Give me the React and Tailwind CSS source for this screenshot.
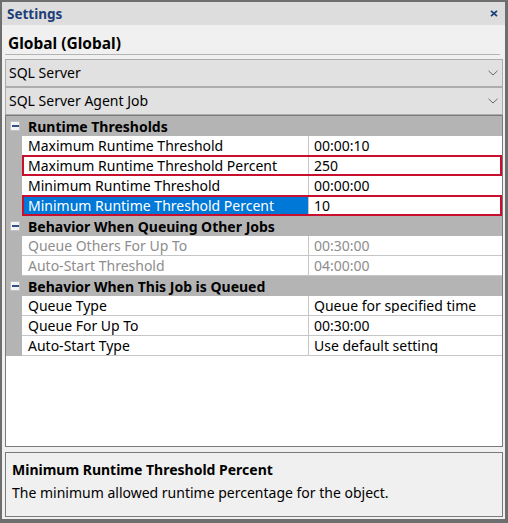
import React from "react";

const F = "font-['Noto_Sans',sans-serif]";

function Minus() {
  return (
    <div className="ml-[4px] w-[10px] h-[10px] border border-[#c2c2c2] bg-[#f4f4f4] flex items-center justify-center">
      <div className="w-[7px] h-[2px] bg-[#34508a]" />
    </div>
  );
}

function Category({ title }) {
  return (
    <div className="h-[20px] bg-[#b4b4b4] flex items-center">
      <div className="w-[16px] flex items-center">
        <Minus />
      </div>
      <span className="pl-[6px] pt-[1px] font-bold text-[14px] leading-[20px] text-black">{title}</span>
    </div>
  );
}

function Row({ name, value, disabled, selected, red, clip }) {
  const color = disabled ? "text-[#8d8d8d]" : "text-black";
  return (
    <div className="relative flex h-[20px]">
      <div className="w-[16px] bg-[#b4b4b4]" />
      <div className="flex-1 flex border-b border-[#c6c6c6] bg-white">
        <div
          className={`w-[287px] border-r border-[#c6c6c6] pl-[6px] text-[14px] leading-[20px] h-[19px] whitespace-nowrap ${
            selected ? "bg-[#0078d7] text-white" : color
          }`}
        >
          {name}
        </div>
        <div className={`flex-1 pl-[5px] text-[14px] leading-[20px] h-[19px] whitespace-nowrap ${color}`}>
          {clip ? <div className="h-[17px] overflow-hidden">{value}</div> : value}
        </div>
      </div>
      {red && (
        <div className="absolute -top-px bottom-0 left-[16px] right-0 border-2 border-[#c8102e]" />
      )}
    </div>
  );
}

function Combo({ text }) {
  return (
    <div className="h-[28px] border border-[#acacac] bg-[#e1e1e1] flex items-center justify-between pl-[3px] pr-[4px]">
      <span className="text-[14px] text-black leading-[20px]">{text}</span>
      <svg width="10" height="6" viewBox="0 0 10 6">
        <path d="M0.5 0.8 L5 5 L9.5 0.8" fill="none" stroke="#6a6a6a" strokeWidth="1" />
      </svg>
    </div>
  );
}

export default function App() {
  return (
    <div
      className={`${F} w-[508px] h-[523px] border-t-2 border-l-2 border-r-[3px] border-b-4 border-[#6e6e6e] bg-[#f0f0f0] flex flex-col`}
    >
      <div className="h-[23px] bg-[#dddddd] flex items-center justify-between pl-[5px] pr-[7px]">
        <span className="font-bold text-[13.5px] leading-[20px] text-[#1e3f78]">Settings</span>
        <svg width="8" height="7" viewBox="0 0 8 7">
          <path d="M1 0.8 L7 6.2 M7 0.8 L1 6.2" stroke="#1e3f78" strokeWidth="1.8" />
        </svg>
      </div>
      <div className="flex-1 flex flex-col pl-[3px] pr-[2px] pb-[2px]">
        <div className="h-[29px] pt-[8px] pl-[3px]">
          <span className="block font-bold text-[15.5px] leading-[20px] text-black">Global (Global)</span>
        </div>
        <div className="h-px bg-[#b4b4b4] mr-[3px]" />
        <div className="h-[4px]" />
        <Combo text="SQL Server" />
        <Combo text="SQL Server Agent Job" />
        <div className="h-[332px] border border-[#7a7a7a] bg-white flex flex-col">
          <Category title="Runtime Thresholds" />
          <Row name="Maximum Runtime Threshold" value="00:00:10" />
          <Row name="Maximum Runtime Threshold Percent" value="250" red />
          <Row name="Minimum Runtime Threshold" value="00:00:00" />
          <Row name="Minimum Runtime Threshold Percent" value="10" selected red />
          <Category title="Behavior When Queuing Other Jobs" />
          <Row name="Queue Others For Up To" value="00:30:00" disabled />
          <Row name="Auto-Start Threshold" value="04:00:00" disabled />
          <Category title="Behavior When This Job is Queued" />
          <Row name="Queue Type" value="Queue for specified time" clip />
          <Row name="Queue For Up To" value="00:30:00" />
          <Row name="Auto-Start Type" value="Use default setting" clip />
        </div>
        <div className="h-[5px]" />
        <div className="h-[65px] border border-[#7a7a7a] bg-[#f0f0f0] pl-[6px]">
          <div className="mt-[7px] font-bold text-[14px] leading-[20px] text-black">
            Minimum Runtime Threshold Percent
          </div>
          <div className="mt-[3px] text-[14px] leading-[20px] text-black">
            The minimum allowed runtime percentage for the object.
          </div>
        </div>
      </div>
    </div>
  );
}
